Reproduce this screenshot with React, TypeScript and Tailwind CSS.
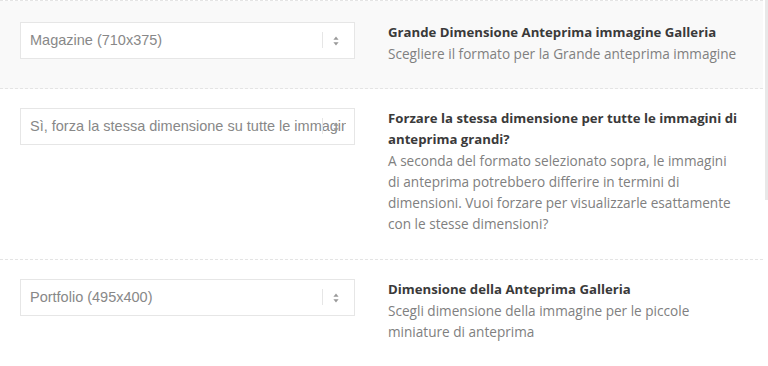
const rows = [
  {
    value: 'Magazine (710x375)',
    title: 'Grande Dimensione Anteprima immagine Galleria',
    desc: 'Scegliere il formato per la Grande anteprima immagine',
    shaded: true,
  },
  {
    value: 'Sì, forza la stessa dimensione su tutte le immagini di anteprima',
    title: 'Forzare la stessa dimensione per tutte le immagini di anteprima grandi?',
    desc: 'A seconda del formato selezionato sopra, le immagini di anteprima potrebbero differire in termini di dimensioni. Vuoi forzare per visualizzarle esattamente con le stesse dimensioni?',
    shaded: false,
  },
  {
    value: 'Portfolio (495x400)',
    title: 'Dimensione della Anteprima Galleria',
    desc: 'Scegli dimensione della immagine per le piccole miniature di anteprima',
    shaded: false,
  },
]

function FakeSelect({ value }: { value: string }) {
  return (
    <div className="relative h-[37px] w-[335px] shrink-0 border border-[#e6e6e6] bg-white">
      <div className="mr-[8px] flex h-full items-center overflow-hidden whitespace-nowrap pl-[9px] font-['Liberation_Sans',Arial,sans-serif] text-[14.5px] text-[#888]">
        {value}
      </div>
      <span className="absolute right-[31px] top-[9px] h-[16px] w-px bg-[#e6e6e6]" />
      <svg className="absolute right-[15px] top-[13px]" width="6" height="10" viewBox="0 0 6 10">
        <path d="M3 0.5 L5.6 3.8 H0.4 Z" fill="#999" />
        <path d="M3 9.5 L5.6 6.2 H0.4 Z" fill="#999" />
      </svg>
    </div>
  )
}

export default function App() {
  return (
    <div className="relative h-[366px] w-[768px] overflow-hidden bg-white">
      <div className="w-[763px] border-t border-dashed border-[#e4e4e4]">
        {rows.map((row, i) => (
          <div
            key={i}
            className={
              'flex items-start border-b border-dashed border-[#e4e4e4] px-5 ' +
              (row.shaded ? 'bg-[#f9f9f9] pb-[24px] pt-[21px]' : 'bg-white pb-[25px] pt-[19px]')
            }
          >
            <FakeSelect value={row.value} />
            <div className="ml-[33px] w-[353px] font-['Open_Sans',sans-serif] leading-[21px]">
              <div className="text-[13.2px] font-bold text-[#3a3a3a]">{row.title}</div>
              <div className="text-[13.6px] text-[#808080]">{row.desc}</div>
            </div>
          </div>
        ))}
      </div>
      <div className="absolute right-0 top-0 h-[200px] w-[3px] bg-[#e8e8e8]" />
    </div>
  )
}
